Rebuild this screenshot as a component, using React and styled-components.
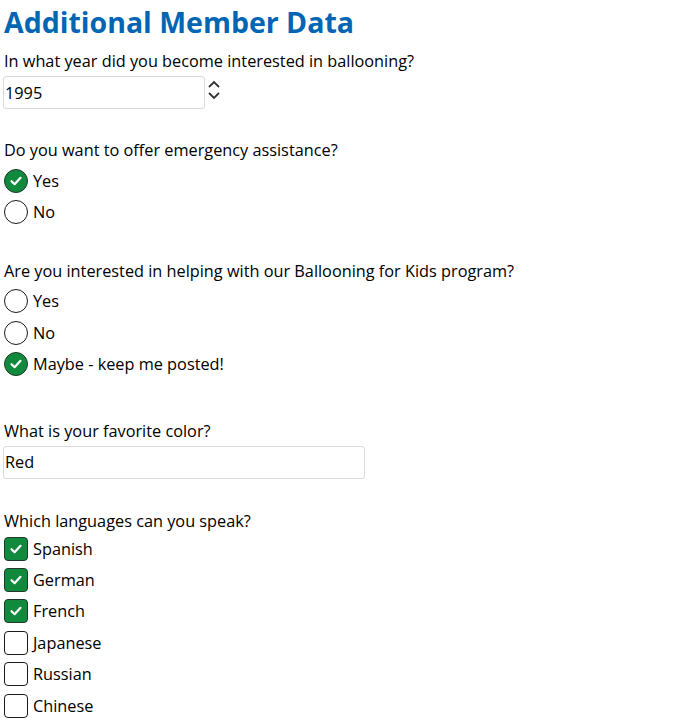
import React, { useState } from "react";
import styled, { createGlobalStyle } from "styled-components";

const Global = createGlobalStyle`
  html, body { margin: 0; padding: 0; background: #fff; }
  body { font-family: "Open Sans", "Noto Sans", sans-serif; color: #000; }
`;

const Page = styled.div`
  padding: 0 3px;
`;

const Title = styled.h1`
  margin: 0;
  padding-top: 3px;
  padding-left: 1px;
  font-size: 28.5px;
  line-height: 38px;
  font-weight: 700;
  color: #0066b3;
`;

const Question = styled.div`
  margin-top: ${(p) => p.$top || 0}px;
`;

const Label = styled.div`
  font-size: 16.3px;
  line-height: 22px;
  padding-left: 1px;
  margin-bottom: ${(p) => (p.$gap ?? 4)}px;
`;

const TextInput = styled.input`
  box-sizing: border-box;
  display: block;
  width: ${(p) => p.$w}px;
  height: 33px;
  border: 1px solid #d9d9d9;
  border-radius: 3px;
  padding: 0 0 0 1px;
  font-family: inherit;
  font-size: 16.3px;
  color: #000;
  outline: none;
  background: #fff;
`;

const NumberRow = styled.div`
  display: flex;
  align-items: flex-start;
`;

const Spinner = styled.svg`
  margin-left: 2px;
  margin-top: 3px;
`;

const Options = styled.div`
  display: flex;
  flex-direction: column;
`;

const Option = styled.label`
  display: flex;
  align-items: center;
  height: 31.4px;
  font-size: 16.3px;
  gap: 5px;
  padding-left: 1px;
  cursor: pointer;
`;

const Mark = styled.span`
  box-sizing: border-box;
  width: 24px;
  height: 24px;
  flex: none;
  display: flex;
  align-items: center;
  justify-content: center;
  border-radius: ${(p) => (p.$round ? "50%" : "4px")};
  border: 1.5px solid ${(p) => (p.$on ? "#1f3a2a" : "#1a1a1a")};
  background: ${(p) => (p.$on ? "#118a3e" : "#fff")};
`;

const Check = () => (
  <svg width="14" height="14" viewBox="0 0 14 14">
    <path d="M2.5 7.2 L5.6 10.2 L11.5 3.8" fill="none" stroke="#fff" strokeWidth="2.2" strokeLinecap="round" strokeLinejoin="round" />
  </svg>
);

function Choice({ round, on, children, onClick }) {
  return (
    <Option onClick={onClick}>
      <Mark $round={round} $on={on}>{on && <Check />}</Mark>
      {children}
    </Option>
  );
}

export default function App() {
  const [emerg, setEmerg] = useState("Yes");
  const [kids, setKids] = useState("Maybe");
  const [langs, setLangs] = useState({ Spanish: true, German: true, French: true, Japanese: false, Russian: false, Chinese: false });
  return (
    <Page>
      <Global />
      <Title>Additional Member Data</Title>
      <Question $top={9}>
        <Label>In what year did you become interested in ballooning?</Label>
        <NumberRow>
          <TextInput $w={202} defaultValue="1995" />
          <Spinner width="14" height="22" viewBox="0 0 14 22">
            <path d="M2 8 L7 3 L12 8" fill="none" stroke="#333" strokeWidth="1.8" />
            <path d="M2 14 L7 19 L12 14" fill="none" stroke="#333" strokeWidth="1.8" />
          </Spinner>
        </NumberRow>
      </Question>
      <Question $top={30}>
        <Label>Do you want to offer emergency assistance?</Label>
        <Options>
          {["Yes", "No"].map((o) => (
            <Choice key={o} round on={emerg === o} onClick={() => setEmerg(o)}>{o}</Choice>
          ))}
        </Options>
      </Question>
      <Question $top={32}>
        <Label>Are you interested in helping with our Ballooning for Kids program?</Label>
        <Options>
          {[["Yes", "Yes"], ["No", "No"], ["Maybe", "Maybe - keep me posted!"]].map(([k, t]) => (
            <Choice key={k} round on={kids === k} onClick={() => setKids(k)}>{t}</Choice>
          ))}
        </Options>
      </Question>
      <Question $top={40}>
        <Label>What is your favorite color?</Label>
        <TextInput $w={362} defaultValue="Red" />
      </Question>
      <Question $top={31}>
        <Label $gap={1}>Which languages can you speak?</Label>
        <Options>
          {Object.keys(langs).map((l) => (
            <Choice key={l} on={langs[l]} onClick={() => setLangs({ ...langs, [l]: !langs[l] })}>{l}</Choice>
          ))}
        </Options>
      </Question>
    </Page>
  );
}
